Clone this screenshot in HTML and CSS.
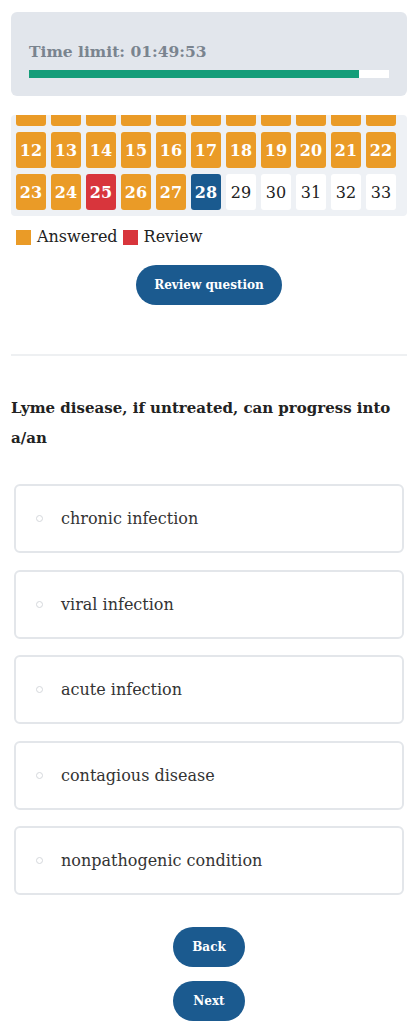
FILE: index.html
```html
<!DOCTYPE html>
<html>
<head>
    <meta charset="UTF-8">
    <title>Quiz</title>
    <link rel="stylesheet" href="styles.css">
</head>
<body>
    <div class="page">
        <div class="timer">
            <div class="timer-label">Time limit: 01:49:53</div>
            <div class="bar"><div class="bar-fill" style="width: 91.7%"></div></div>
        </div>

        <div class="nav">
            <div class="nav-grid">
                <span class="cell done">1</span>
                <span class="cell done">2</span>
                <span class="cell done">3</span>
                <span class="cell done">4</span>
                <span class="cell done">5</span>
                <span class="cell done">6</span>
                <span class="cell done">7</span>
                <span class="cell done">8</span>
                <span class="cell done">9</span>
                <span class="cell done">10</span>
                <span class="cell done">11</span>
                <span class="cell done">12</span>
                <span class="cell done">13</span>
                <span class="cell done">14</span>
                <span class="cell done">15</span>
                <span class="cell done">16</span>
                <span class="cell done">17</span>
                <span class="cell done">18</span>
                <span class="cell done">19</span>
                <span class="cell done">20</span>
                <span class="cell done">21</span>
                <span class="cell done">22</span>
                <span class="cell done">23</span>
                <span class="cell done">24</span>
                <span class="cell review">25</span>
                <span class="cell done">26</span>
                <span class="cell done">27</span>
                <span class="cell current">28</span>
                <span class="cell">29</span>
                <span class="cell">30</span>
                <span class="cell">31</span>
                <span class="cell">32</span>
                <span class="cell">33</span>
            </div>
        </div>

        <div class="legend">
            <span class="swatch done"></span>Answered
            <span class="swatch review"></span>Review
        </div>

        <div class="center">
            <button class="btn btn-wide">Review question</button>
        </div>

        <hr class="rule">

        <div class="question">Lyme disease, if untreated, can progress into a/an</div>

        <div class="options">
            <label class="option"><span class="dot"></span>chronic infection</label>
            <label class="option"><span class="dot"></span>viral infection</label>
            <label class="option"><span class="dot"></span>acute infection</label>
            <label class="option"><span class="dot"></span>contagious disease</label>
            <label class="option"><span class="dot"></span>nonpathogenic condition</label>
        </div>

        <div class="actions">
            <button class="btn">Back</button>
            <button class="btn">Next</button>
        </div>
    </div>
</body>
</html>
```

FILE: styles.css
```css
body {
    margin: 0;
    background: #fff;
    font-family: "DejaVu Serif", "Liberation Serif", serif;
    color: #222;
}

.page {
    padding: 12px 11px 0 11px;
}

.timer {
    background: #e2e6ec;
    border-radius: 6px;
    padding: 30px 18px 18px 18px;
    height: 36px;
}

.timer-label {
    font-size: 15.5px;
    font-weight: bold;
    color: #7a848f;
    line-height: 20px;
}

.bar {
    margin-top: 8px;
    height: 8px;
    background: #fff;
}

.bar-fill {
    height: 8px;
    background: #149d79;
}

.nav {
    margin-top: 19px;
    height: 101px;
    overflow: hidden;
    background: #eef1f5;
    border-radius: 4px;
}

.nav-grid {
    margin-top: -25px;
    padding-left: 5px;
    display: grid;
    grid-template-columns: repeat(11, 30px);
    grid-auto-rows: 36px;
    column-gap: 5px;
    row-gap: 6px;
}

.cell {
    display: flex;
    align-items: center;
    justify-content: center;
    background: #fff;
    border-radius: 3px;
    font-size: 16px;
    color: #222;
}

.cell.done {
    background: #ea9b27;
    color: #fff;
    font-weight: bold;
}

.cell.review {
    background: #d8353c;
    color: #fff;
    font-weight: bold;
}

.cell.current {
    background: #1a5a8f;
    color: #fff;
    font-weight: bold;
}

.legend {
    margin-top: 11px;
    padding-left: 5px;
    font-size: 16px;
    line-height: 20px;
    display: flex;
    align-items: center;
}

.swatch {
    display: inline-block;
    width: 15px;
    height: 15px;
    margin-right: 6px;
}

.swatch.done {
    background: #ea9b27;
}

.swatch.review {
    background: #d8353c;
    margin-left: 5px;
}

.center {
    margin-top: 18px;
    text-align: center;
}

.btn {
    height: 40px;
    padding: 0 18px;
    border: none;
    border-radius: 20px;
    background: #1b5a8f;
    color: #fff;
    font-family: "DejaVu Serif", "Liberation Serif", serif;
    font-weight: bold;
    font-size: 12px;
}

.btn-wide {
    width: 146px;
}

.rule {
    margin: 49px 0 0 0;
    border: none;
    border-top: 2px solid #eef0f2;
}

.question {
    margin-top: 37px;
    font-size: 15px;
    font-weight: bold;
    line-height: 30px;
    color: #222;
}

.options {
    margin-top: 31px;
    padding: 0 3px;
    display: flex;
    flex-direction: column;
    gap: 16.5px;
}

.option {
    height: 65px;
    border: 2px solid #e3e6ea;
    border-radius: 6px;
    display: flex;
    align-items: center;
    padding-left: 20px;
    font-size: 16px;
    color: #333;
}

.dot {
    width: 5px;
    height: 5px;
    border: 1px solid #d5d8dc;
    border-radius: 50%;
    margin-right: 18px;
}

.actions {
    margin-top: 32px;
    display: flex;
    flex-direction: column;
    align-items: center;
    gap: 14px;
}

.actions .btn {
    width: 72px;
    padding: 0;
}
```
